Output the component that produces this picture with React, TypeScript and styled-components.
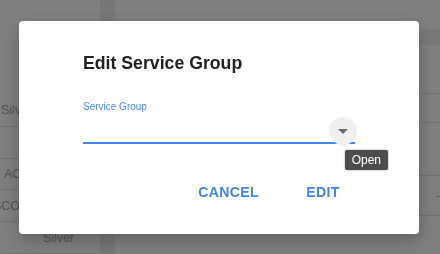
import styled, { createGlobalStyle } from "styled-components";

const GlobalStyle = createGlobalStyle`
  html, body {
    margin: 0;
    padding: 0;
    width: 440px;
    height: 254px;
    overflow: hidden;
    font-family: "Liberation Sans", Arial, sans-serif;
  }
`;

const Page = styled.div`
  display: flex;
  width: 440px;
  height: 254px;
  background: #ffffff;
`;

const Sidebar = styled.div`
  display: flex;
  flex-direction: column;
  width: 100px;
  padding-top: 95px;
  background: #fefefe;
  overflow: hidden;
`;

const SideRow = styled.div<{ $indent: number }>`
  height: 32px;
  box-sizing: border-box;
  border-bottom: 1px solid #e2e2e2;
  padding-left: ${(p) => Math.max(p.$indent, 0)}px;
  display: flex;
  align-items: center;
  color: #aaaaaa;
  font-size: 12.5px;
  white-space: nowrap;
  overflow: hidden;

  span {
    margin-left: ${(p) => Math.min(p.$indent, 0)}px;
  }
`;

const Gutter = styled.div`
  width: 15px;
  background: #eeeeee;
`;

const Main = styled.div`
  flex: 1;
  display: flex;
  flex-direction: column;
  padding-top: 29px;
`;

const MainHeader = styled.div`
  height: 16px;
  background: #f3f3f3;
`;

const MainRow = styled.div<{ $h: number }>`
  height: ${(p) => p.$h}px;
  box-sizing: border-box;
  border-bottom: 1px solid #e2e2e2;
  display: flex;
  align-items: center;
  justify-content: flex-end;
  color: #aaaaaa;
  font-size: 12px;
`;

const Backdrop = styled.div`
  position: fixed;
  inset: 0;
  background: rgba(0, 0, 0, 0.5);
  display: flex;
  align-items: center;
  justify-content: center;
  padding: 1px 2px 0 0;
`;

const Dialog = styled.div`
  width: 400px;
  height: 213px;
  box-sizing: border-box;
  background: #ffffff;
  border-radius: 4px;
  box-shadow: 0 6px 18px rgba(0, 0, 0, 0.25);
  padding: 30px 64px 24px;
  display: flex;
  flex-direction: column;
`;

const Title = styled.h2`
  margin: 0;
  font-size: 17.7px;
  line-height: 24px;
  font-weight: 700;
  color: #212121;
`;

const Field = styled.div`
  margin-top: 25px;
  display: flex;
  flex-direction: column;
`;

const Label = styled.label`
  font-size: 10px;
  line-height: 14px;
  color: #4a8af4;
`;

const InputRow = styled.div`
  position: relative;
  height: 30px;
  box-sizing: border-box;
  border-bottom: 2px solid #4285f4;
`;

const PopupButton = styled.button`
  position: absolute;
  right: -2px;
  top: 3px;
  width: 28px;
  height: 28px;
  border: none;
  border-radius: 50%;
  background: #f0f0f0;
  padding: 0;
  display: flex;
  align-items: center;
  justify-content: center;
`;

const Tooltip = styled.div`
  position: absolute;
  right: -33px;
  top: 36px;
  height: 20px;
  padding: 0 7px;
  display: flex;
  align-items: center;
  background: #4d4d4d;
  border-radius: 2px;
  box-shadow: 0 0 2px rgba(0, 0, 0, 0.45);
  color: #ffffff;
  font-size: 12px;
  white-space: nowrap;
`;

const Actions = styled.div`
  margin-top: 30px;
  display: flex;
  justify-content: flex-end;
  gap: 24px;
`;

const TextButton = styled.button`
  min-width: 64px;
  padding: 6px 8px;
  border: none;
  background: transparent;
  font-family: "Liberation Sans", Arial, sans-serif;
  font-size: 14px;
  line-height: 24px;
  font-weight: 700;
  letter-spacing: 0.4px;
  color: #4285f4;
  text-transform: uppercase;
`;

const sideRows = [
  { text: "Silver Plan", indent: 1 },
  { text: "", indent: 0 },
  { text: "ACME Corp", indent: 4 },
  { text: "SCORE Ltd", indent: -7 },
  { text: "Silver", indent: 43 },
];

export default function App() {
  return (
    <>
      <GlobalStyle />
      <Page>
        <Sidebar>
          {sideRows.map((r, i) => (
            <SideRow key={i} $indent={r.indent}>
              <span>{r.text}</span>
            </SideRow>
          ))}
        </Sidebar>
        <Gutter />
        <Main>
          <MainHeader />
          <MainRow $h={49} />
          <MainRow $h={29} />
          <MainRow $h={53} />
          <MainRow $h={40}>-</MainRow>
        </Main>
      </Page>
      <Backdrop>
        <Dialog role="dialog">
          <Title>Edit Service Group</Title>
          <Field>
            <Label>Service Group</Label>
            <InputRow>
              <PopupButton aria-label="Open">
                <svg width="10" height="5" viewBox="0 0 10 5">
                  <path d="M0 0 L5 5 L10 0 Z" fill="#6b6b6b" />
                </svg>
              </PopupButton>
              <Tooltip>Open</Tooltip>
            </InputRow>
          </Field>
          <Actions>
            <TextButton>Cancel</TextButton>
            <TextButton>Edit</TextButton>
          </Actions>
        </Dialog>
      </Backdrop>
    </>
  );
}
